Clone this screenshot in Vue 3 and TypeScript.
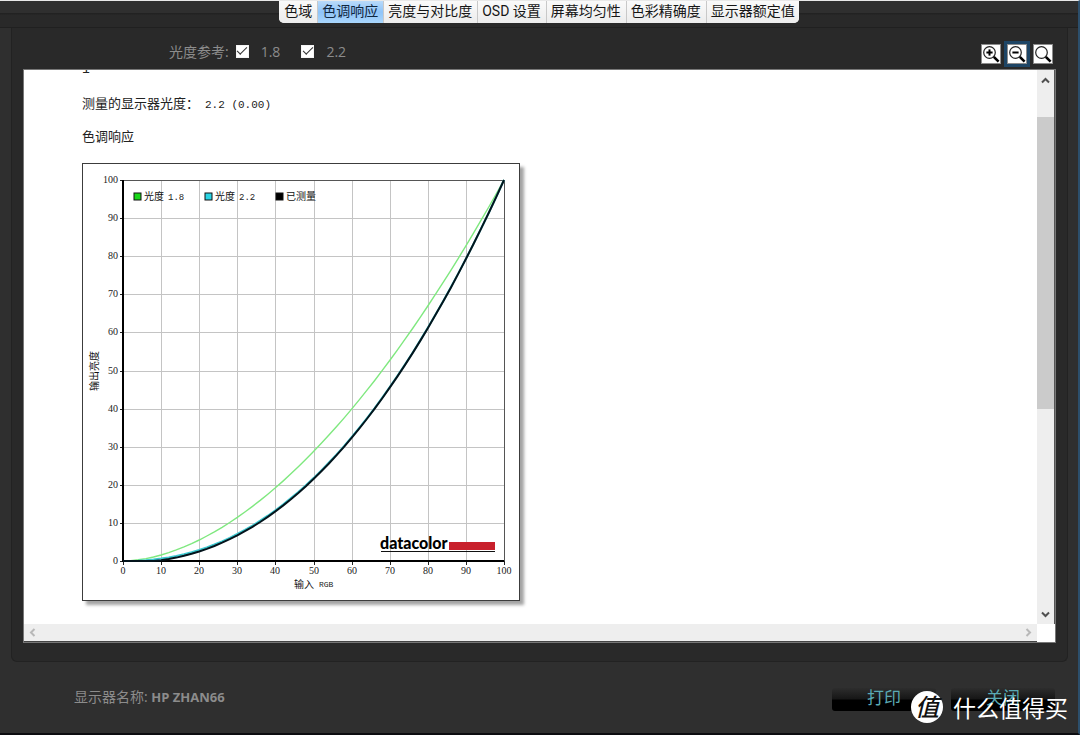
<script setup lang="ts">
import { ref } from 'vue'

const tabs: string[] = ['色域', '色调响应', '亮度与对比度', 'OSD 设置', '屏幕均匀性', '色彩精确度', '显示器额定值']
const activeTab = ref(1)
const showGamma18 = ref(true)
const showGamma22 = ref(true)
const activeZoom = ref('out')

const zoomTools = [
  { id: 'in', label: '放大' },
  { id: 'out', label: '缩小' },
  { id: 'fit', label: '适合窗口' },
]

const plot = { left: 41, top: 17, size: 381 }
const ticks = Array.from({ length: 11 }, (_, i) => i * 10)
const px = (v: number): number => Math.round(plot.left + (v / 100) * plot.size)
const py = (v: number): number => Math.round(plot.top + plot.size - (v / 100) * plot.size)

function curve(response: (x: number) => number): string {
  const points: string[] = []
  for (let i = 0; i <= 50; i++) {
    const x = i / 50
    const cx = plot.left + x * plot.size
    const cy = plot.top + plot.size * (1 - response(x))
    points.push(`${cx.toFixed(1)},${cy.toFixed(1)}`)
  }
  return points.join(' ')
}

const gamma18 = curve((x) => Math.pow(x, 1.8))
const gamma22 = curve((x) => Math.pow(x, 2.2))
const measured = curve((x) => Math.max(0, Math.pow(x, 2.2) - 0.005 * (1 - x)))

const legend = [
  { x: 52, color: '#18d818', name: '光度', value: '1.8' },
  { x: 123, color: '#2ad4e4', name: '光度', value: '2.2' },
  { x: 194, color: '#000', name: '已测量', value: '' },
]
</script>

<template>
  <div class="window">
    <header class="top">
      <nav class="tabs" role="tablist">
        <button
          v-for="(tab, i) in tabs"
          :key="tab"
          type="button"
          role="tab"
          class="tab"
          :class="{ active: i === activeTab }"
          :aria-selected="i === activeTab"
          @click="activeTab = i"
        >{{ tab }}</button>
      </nav>
    </header>

    <main class="panel">
      <div class="toolbar">
        <span class="caption">光度参考:</span>
        <label class="option"><input v-model="showGamma18" type="checkbox" /><span>1.8</span></label>
        <label class="option"><input v-model="showGamma22" type="checkbox" /><span>2.2</span></label>
        <div class="zoom">
          <button
            v-for="tool in zoomTools"
            :key="tool.id"
            type="button"
            class="zoom-btn"
            :class="{ focused: tool.id === activeZoom }"
            :aria-label="tool.label"
            @click="activeZoom = tool.id"
          >
            <svg width="18" height="18" viewBox="0 0 18 18">
              <circle cx="7.5" cy="7.5" r="5.8" fill="#fff" stroke="#222" stroke-width="1.2" />
              <path d="M11.8 11.8L16.6 16.6" stroke="#000" stroke-width="2.6" />
              <path v-if="tool.id !== 'fit'" d="M4.4 7.5H10.6" stroke="#000" stroke-width="2" />
              <path v-if="tool.id === 'in'" d="M7.5 4.4V10.6" stroke="#000" stroke-width="2" />
            </svg>
          </button>
        </div>
      </div>

      <div class="viewer">
        <section class="page">
          <p class="line clipped">1</p>
          <p class="line">测量的显示器光度：<span class="reading">2.2 (0.00)</span></p>
          <p class="line">色调响应</p>
          <figure class="chart">
            <svg width="436" height="436" viewBox="1 1 436 436" role="img" aria-label="色调响应">
              <g stroke="#c4c4c4" shape-rendering="crispEdges">
                <line v-for="t in ticks.slice(1, 10)" :key="'v' + t" :x1="px(t)" :x2="px(t)" :y1="py(100)" :y2="py(0)" />
                <line v-for="t in ticks.slice(1, 10)" :key="'h' + t" :x1="px(0)" :x2="px(100)" :y1="py(t)" :y2="py(t)" />
              </g>
              <path :d="`M${px(0)} ${py(100)}H${px(100)}V${py(0)}`" fill="none" stroke="#555" shape-rendering="crispEdges" />
              <g stroke="#222" shape-rendering="crispEdges">
                <line v-for="t in ticks" :key="'ty' + t" :x1="px(0) - 3" :x2="px(0)" :y1="py(t)" :y2="py(t)" />
                <line v-for="t in ticks" :key="'tx' + t" :x1="px(t)" :x2="px(t)" :y1="py(0)" :y2="py(0) + 4" />
              </g>
              <path :d="`M${px(0)} ${py(100)}V${py(0)}H${px(100)}`" fill="none" stroke="#000" stroke-width="2" />
              <polyline v-if="showGamma18" :points="gamma18" fill="none" stroke="#7fe87f" stroke-width="1.4" />
              <polyline v-if="showGamma22" :points="gamma22" fill="none" stroke="#3cc8d0" stroke-width="2" />
              <polyline :points="measured" fill="none" stroke="#04141c" stroke-width="2" />

              <g class="num" text-anchor="end">
                <text v-for="t in ticks" :key="'ly' + t" x="36" :y="py(t) + 3">{{ t }}</text>
              </g>
              <g class="num" text-anchor="middle">
                <text v-for="t in ticks" :key="'lx' + t" :x="px(t)" :y="py(0) + 13">{{ t }}</text>
              </g>

              <g v-for="item in legend" :key="item.x">
                <rect :x="item.x" y="30" width="7" height="7" :fill="item.color" stroke="#111" />
                <text class="cjk" :x="item.x + 10" y="37">{{ item.name }}</text>
                <text class="mono value" :x="item.x + 34" y="37">{{ item.value }}</text>
              </g>

              <text class="cjk" x="212" y="425">输入</text>
              <text class="mono" x="237" y="424">RGB</text>
              <text class="cjk" text-anchor="middle" transform="translate(16 208) rotate(-90)">输出亮度</text>

              <text class="brand" x="298" y="386">datacolor</text>
              <rect x="367" y="379" width="46" height="8" fill="#c8202c" />
              <rect x="299" y="388" width="114" height="1" fill="#111" />
            </svg>
          </figure>
        </section>

        <div class="vbar">
          <button type="button" class="arrow" aria-label="向上滚动">
            <svg width="9" height="7" viewBox="0 0 9 7"><path d="M1 5.5L4.5 2L8 5.5" fill="none" stroke="#505050" stroke-width="2" /></svg>
          </button>
          <div class="track"><div class="thumb"></div></div>
          <button type="button" class="arrow" aria-label="向下滚动">
            <svg width="9" height="7" viewBox="0 0 9 7"><path d="M1 1.5L4.5 5L8 1.5" fill="none" stroke="#505050" stroke-width="2" /></svg>
          </button>
        </div>

        <div class="hbar">
          <button type="button" class="arrow" aria-label="向左滚动">
            <svg width="7" height="9" viewBox="0 0 7 9"><path d="M5.5 1L2 4.5L5.5 8" fill="none" stroke="#b8b8b8" stroke-width="2" /></svg>
          </button>
          <button type="button" class="arrow" aria-label="向右滚动">
            <svg width="7" height="9" viewBox="0 0 7 9"><path d="M1.5 1L5 4.5L1.5 8" fill="none" stroke="#b8b8b8" stroke-width="2" /></svg>
          </button>
        </div>
        <div class="corner"></div>
      </div>
    </main>

    <footer class="bottom">
      <p class="monitor">显示器名称: <b>HP ZHAN66</b></p>
      <div class="actions">
        <button type="button" class="action">打印</button>
        <button type="button" class="action">关闭</button>
      </div>
    </footer>

    <div class="watermark">
      <span class="seal">值</span>
      <span>什么值得买</span>
    </div>
  </div>
</template>

<style>
body {
  background: #2f2f2f;
}
</style>

<style scoped>
.window {
  position: relative;
  box-sizing: border-box;
  min-height: 100vh;
  display: flex;
  flex-direction: column;
  background: #2f2f2f;
  border-top: 1px solid #e8e8e8;
  border-right: 2px solid #2c4f6c;
  border-bottom: 2px solid #0c0c10;
  color: #8c8c8c;
  font-family: "Open Sans", "Noto Sans CJK SC", sans-serif;
  font-size: 14px;
}

button {
  margin: 0;
  padding: 0;
  border: 0;
  font: inherit;
}

p {
  margin: 0;
}

.top {
  display: flex;
  justify-content: center;
  height: 27px;
  background: linear-gradient(#2f2f2f 12px, #222 12px, #222 13px, #292929 14px, #292929 26px, #202020 26px);
}

.tabs {
  display: flex;
  height: 22px;
  overflow: hidden;
  border-radius: 0 0 5px 5px;
  background: #f3f3f3;
}

.tab {
  padding: 0 5px 2px 4px;
  border-right: 1px solid #c8c8c8;
  background: linear-gradient(#fafafa, #ececec);
  color: #161616;
  font-family: Roboto, "Noto Sans CJK SC", sans-serif;
  line-height: 20px;
  white-space: nowrap;
}

.tab:first-child {
  padding-left: 5px;
}

.tab:last-child {
  padding-right: 4px;
  border-right: 0;
}

.tab.active {
  background: linear-gradient(#b9dafa, #8fc4f8 50%, #a9d6fc);
  color: #10273f;
}

.panel {
  flex: 1;
  display: flex;
  flex-direction: column;
  margin: 0 10px 0 11px;
  padding: 0 11px 18px;
  border: 1px solid #222;
  border-top: 0;
  border-radius: 0 0 6px 6px;
  background: #292929;
}

.toolbar {
  display: flex;
  align-items: center;
  height: 41px;
  padding: 0 3px 0 146px;
}

.caption {
  margin: 5px 7px 0 0;
}

.option {
  display: flex;
  align-items: center;
  gap: 12px;
  margin-right: 21px;
  padding-top: 5px;
}

.option input {
  appearance: none;
  box-sizing: border-box;
  width: 13px;
  height: 13px;
  margin: 0;
  display: grid;
  place-items: center;
  border: 1px solid #f4f4f4;
  background: #fff;
}

.option input:checked::before {
  content: "";
  width: 10px;
  height: 5px;
  margin-bottom: 3px;
  border: solid #333;
  border-width: 0 0 1px 1px;
  box-sizing: border-box;
  rotate: -45deg;
}

.zoom {
  display: flex;
  gap: 6px;
  margin: 11px 0 0 auto;
}

.zoom-btn {
  display: grid;
  place-items: center;
  width: 20px;
  height: 20px;
  border: 1px solid #8c8c8c;
  background: #fff;
}

.zoom-btn.focused {
  outline: 3px solid #1e4565;
}

.viewer {
  flex: 1;
  display: grid;
  grid-template-columns: minmax(0, 1fr) 18px;
  grid-template-rows: minmax(0, 1fr) 18px;
  border: 1px solid #777;
  background: #fff;
}

.page {
  overflow: hidden;
  padding: 0 58px 20px;
}

.line {
  height: 33px;
  line-height: 33px;
  color: #222;
  font-family: "Noto Sans CJK SC", sans-serif;
  font-size: 13px;
}

.line.clipped {
  margin-top: -17px;
  font-family: "Liberation Mono", monospace;
}

.reading {
  margin-left: 6px;
  font-family: "Liberation Mono", monospace;
  font-size: 11px;
}

.chart {
  width: 436px;
  margin: 11px 0 0;
  border: 1px solid #3c3c3c;
  background: #fff;
  box-shadow: 4px 4px 3px #a4a4a4;
}

.chart svg {
  display: block;
}

.num {
  fill: #222;
  font-family: "Liberation Serif", serif;
  font-size: 10px;
}

.mono {
  fill: #222;
  font-family: "Liberation Mono", monospace;
  font-size: 8px;
}

.mono.value {
  font-size: 9px;
}

.cjk {
  fill: #111;
  font-family: "Noto Sans CJK SC", sans-serif;
  font-size: 10px;
}

.brand {
  fill: #000;
  font-family: Lato, sans-serif;
  font-size: 16px;
  font-weight: 900;
}

.vbar {
  display: flex;
  flex-direction: column;
  background: #eee;
  border-right: 1px solid #555;
}

.hbar {
  display: flex;
  justify-content: space-between;
  background: #eee;
  border-bottom: 1px solid #444;
}

.arrow {
  display: grid;
  place-items: center;
  width: 17px;
  height: 17px;
  background: transparent;
}

.vbar .arrow {
  height: 20px;
}

.track {
  flex: 1;
  padding-top: 27px;
}

.thumb {
  height: 60%;
  background: #cbcbcb;
}

.corner {
  background: #fff;
}

.bottom {
  display: flex;
  align-items: center;
  justify-content: space-between;
  box-sizing: border-box;
  height: 71px;
  padding: 0 23px 4px 74px;
}

.monitor {
  white-space: nowrap;
}

.monitor b {
  font-size: 13px;
}

.actions {
  display: flex;
  gap: 15px;
  margin-top: 8px;
}

.action {
  width: 104px;
  height: 23px;
  padding-bottom: 3px;
  border-radius: 3px;
  background: linear-gradient(#2d2d2d, #161616 48%, #000 52%);
  color: #5aaab4;
  font-size: 17px;
  line-height: 20px;
}

.watermark {
  position: absolute;
  right: 10px;
  bottom: 9px;
  display: flex;
  align-items: center;
  gap: 10px;
  color: #fff;
  font-family: "Noto Sans CJK SC", sans-serif;
  font-size: 23px;
  line-height: 34px;
  pointer-events: none;
}

.seal {
  width: 32px;
  height: 32px;
  border-radius: 50%;
  background: #fff;
  color: #111;
  font-size: 24px;
  font-style: italic;
  font-weight: 500;
  line-height: 30px;
  text-align: center;
}
</style>
